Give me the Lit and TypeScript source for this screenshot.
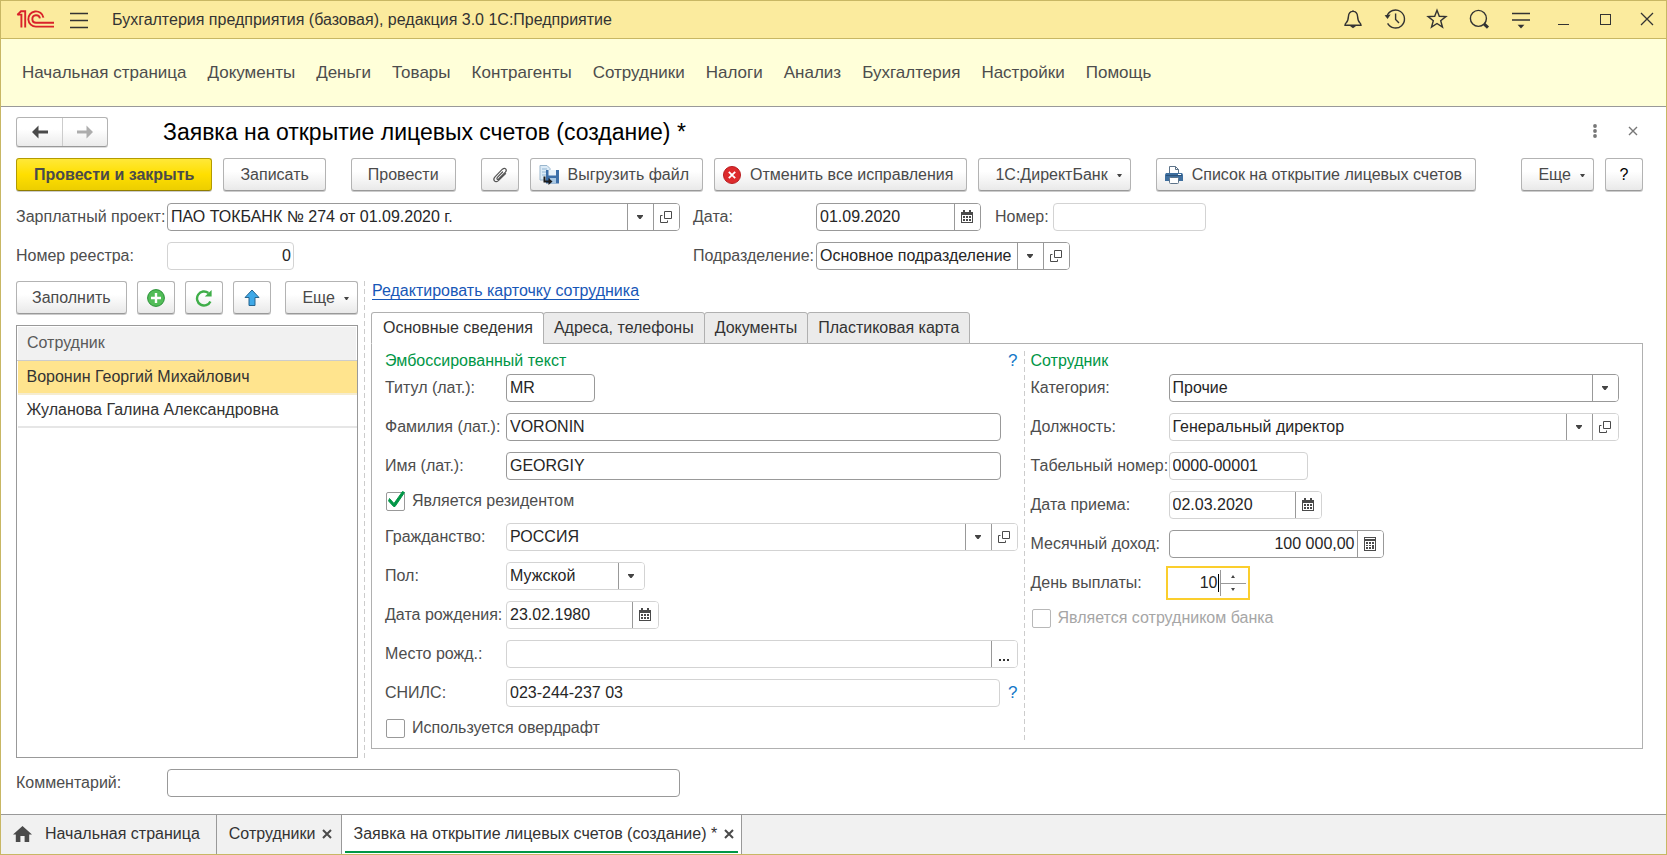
import { LitElement, html, css, svg, nothing } from "lit";
import { customElement, property, state } from "lit/decorators.js";
import { classMap } from "lit/directives/class-map.js";

const logo = svg`<svg width="38" height="19" viewBox="0 0 38 19" fill="none" stroke="#d9222a" stroke-width="1.9">
  <path d="M1.4 4.6H5.4V17.6"/><path d="M1.4 4.9L5 1.3H9.2V17.6"/>
  <path d="M27.4 7.6A7.6 7.6 0 1 0 20 16.6H38"/>
  <path d="M23.9 8.4A3.8 3.8 0 1 0 20 12.8H38"/>
</svg>`;

const stroked = (body: unknown, size = 24, width = 1.4) => svg`<svg width=${size} height=${size} viewBox="0 0 24 24" fill="none" stroke="currentColor" stroke-width=${width}>${body}</svg>`;

const icons: Record<string, unknown> = {
  burger: stroked(svg`<path d="M3 5.5H21M3 12.5H21M3 19.5H21"/>`),
  bell: stroked(svg`<path d="M12 3.2V4.5M12 4.4C8.8 4.4 7.6 7 7.4 9.6 7.2 12.6 6.8 14.4 5.2 15.8 4.2 16.7 4 17.2 4 18.3H20C20 17.2 19.8 16.7 18.8 15.8 17.2 14.4 16.8 12.6 16.6 9.6 16.4 7 15.2 4.4 12 4.4Z"/><path d="M9 19H15L12 21.2Z" fill="currentColor" stroke="none"/>`),
  history: stroked(svg`<path d="M4 9A9 9 0 1 1 4.6 16.4"/><path d="M1.6 8.2L7.6 7.4 4.6 12Z" fill="currentColor" stroke="none"/><path d="M12.6 6.5V12.5L16 16"/>`),
  star: stroked(svg`<path d="M12 3.2L14.3 9.3 20.9 9.6 15.7 13.7 17.5 20.2 12 16.5 6.5 20.2 8.3 13.7 3.1 9.6 9.7 9.3Z"/>`),
  search: stroked(svg`<circle cx="11.4" cy="11.4" r="8"/><path d="M17 16.8L21 20.6" stroke-width="3"/>`),
  service: stroked(svg`<path d="M3 6.5H21M3 13H21"/><path d="M8.6 17.8H15.4L12 21.4Z" fill="currentColor" stroke="none"/>`),
  minimize: svg`<svg width="24" height="24" viewBox="0 0 24 24" stroke="currentColor"><path d="M7 17.5H18"/></svg>`,
  maximize: svg`<svg width="24" height="24" viewBox="0 0 24 24" fill="none" stroke="currentColor"><rect x="7.5" y="7.5" width="10" height="10"/></svg>`,
  close: stroked(svg`<path d="M6 6L18 18M18 6L6 18"/>`, 24, 1.3),
  back: svg`<svg width="18" height="14" viewBox="0 0 18 14"><path d="M7.5 0.5L1 7 7.5 13.5V8.5H17V5.5H7.5Z" fill="#4a4a4a"/></svg>`,
  forward: svg`<svg width="18" height="14" viewBox="0 0 18 14"><path d="M10.5 0.5L17 7 10.5 13.5V8.5H1V5.5H10.5Z" fill="#adadad"/></svg>`,
  kebab: svg`<svg width="6" height="16" viewBox="0 0 6 16" fill="#777"><circle cx="3" cy="3" r="1.9"/><circle cx="3" cy="8" r="1.9"/><circle cx="3" cy="13" r="1.9"/></svg>`,
  cross: svg`<svg width="10" height="10" viewBox="0 0 10 10" stroke="#777" stroke-width="1.4"><path d="M1 1L9 9M9 1L1 9"/></svg>`,
  tabCross: svg`<svg width="10" height="10" viewBox="0 0 10 10" stroke="#4a4a4a" stroke-width="2"><path d="M1 1L9 9M9 1L1 9"/></svg>`,
  clip: svg`<svg width="20" height="20" viewBox="0 0 20 20" fill="none" stroke="#555" stroke-width="1.2" stroke-linecap="round"><path d="M12.6 7L7.4 12.4C6.2 13.8 7.4 15 8.6 14L15.4 7.2C17.6 4.6 15 2 12.4 4.2L5 11.8C2.2 15 5.2 18.2 8.4 15.6L15.6 8.6"/></svg>`,
  save: svg`<svg width="20" height="20" viewBox="0 0 20 20"><path d="M1 0.5H8L11 3.5V15H1Z" fill="#dcebf7" stroke="#9ab6cd"/><path d="M3 4H8M3 7H7M3 10H7" stroke="#8fb4d2"/><path d="M7 5H20V18.5H7Z" fill="#3c6ea8"/><path d="M9.5 5H17V10.5H9.5Z" fill="#e8f1f9"/><path d="M11 13H17V18.5H11Z" fill="#a9c8e4"/><path d="M5.5 11.5V16.5H11" fill="none" stroke="#1d1d1d" stroke-width="2"/><path d="M9.5 13L13.5 16.5 9.5 20Z" fill="#1d1d1d"/></svg>`,
  cancel: svg`<svg width="18" height="18" viewBox="0 0 18 18"><circle cx="9" cy="9" r="8.5" fill="#dd2a2c" stroke="#b81d20"/><path d="M5.8 5.8L12.2 12.2M12.2 5.8L5.8 12.2" stroke="#fff" stroke-width="1.8"/></svg>`,
  printer: svg`<svg width="18" height="18" viewBox="0 0 18 18"><path d="M4.5 8V0.5H10.5L13.5 3.5V8" fill="#fff" stroke="#5d7389"/><path d="M10.5 0.5V3.5H13.5" fill="none" stroke="#5d7389"/><path d="M1 7H17L18 8.5V15H0V8.5Z" fill="#3f6f9f"/><path d="M1 9.5H17" stroke="#2c527a"/><rect x="13" y="8" width="3" height="1" fill="#fff"/><rect x="4.5" y="11.5" width="9" height="6" rx="1" fill="#fff" stroke="#5d7389"/></svg>`,
  plus: svg`<svg width="18" height="18" viewBox="0 0 18 18"><circle cx="9" cy="9" r="8.4" fill="#52bd58" stroke="#2a9137"/><path d="M9 4V14M4 9H14" stroke="#fff" stroke-width="2.4"/></svg>`,
  refresh: svg`<svg width="18" height="18" viewBox="0 0 18 18"><path d="M15.4 12.4A7 7 0 1 1 13.4 4" fill="none" stroke="#3fae49" stroke-width="2.4"/><path d="M16.6 1V7.6H9.8Z" fill="#3fae49"/></svg>`,
  up: svg`<svg width="16" height="18" viewBox="0 0 16 18"><path d="M8 1L15 8.5H11V16.5H5V8.5H1Z" fill="#3fa9e8" stroke="#27658f"/></svg>`,
  caret: svg`<svg width="6" height="4" viewBox="0 0 6 4"><path d="M0 0H6V1L3.6 4H2.4L0 1Z" fill="#444"/></svg>`,
  smallCaret: svg`<svg width="5" height="4" viewBox="0 0 5 4"><path d="M0 1H5L3 4H2Z" fill="#444"/></svg>`,
  caretUp: svg`<svg width="4" height="3" viewBox="0 0 4 3"><path d="M0 3H4L2 0Z" fill="#444"/></svg>`,
  caretDown: svg`<svg width="4" height="3" viewBox="0 0 4 3"><path d="M0 0H4L2 3Z" fill="#444"/></svg>`,
  open: svg`<svg width="12" height="12" viewBox="0 0 12 12" fill="none" stroke="#4a4a4a"><path d="M4.5 0.5H11.5V7.5H4.5Z"/><path d="M2.5 4.5H0.5V11.5H7.5V9.5"/></svg>`,
  calendar: svg`<svg width="12" height="14" viewBox="0 0 12 14"><path d="M0 2H2V0H4V2H8V0H10V2H12V13H0Z" fill="#4a4a4a"/><path d="M1 5H11V12H1Z" fill="#fff"/><path d="M2 6H4V8H2ZM5 6H7V8H5ZM8 6H10V8H8ZM2 9H4V11H2ZM5 9H7V11H5ZM8 9H10V11H8Z" fill="#4a4a4a"/></svg>`,
  calc: svg`<svg width="12" height="14" viewBox="0 0 12 14"><path d="M0 0H12V14H0Z" fill="#4a4a4a"/><path d="M1 1H11V2H1ZM1 4H11V13H1Z" fill="#fff"/><path d="M2 5H4V7H2ZM5 5H7V7H5ZM8 5H10V7H8ZM2 8H4V9H2ZM5 8H7V9H5ZM8 8H10V12H8ZM2 10H4V12H2ZM5 10H7V12H5Z" fill="#4a4a4a"/></svg>`,
  dots: svg`<svg width="10" height="2" viewBox="0 0 10 2" fill="#333"><rect width="2" height="2"/><rect x="4" width="2" height="2"/><rect x="8" width="2" height="2"/></svg>`,
  home: svg`<svg width="19" height="16" viewBox="0 0 19 16"><path d="M9.5 0L19 8.5H16.2V16H11.6V10H7.4V16H2.8V8.5H0Z" fill="#4a4a4a"/></svg>`,
};

const base = css`
  * { box-sizing: border-box; }
  button, input, select { font: inherit; color: inherit; margin: 0; }
  button { cursor: pointer; }
  svg { display: block; flex: none; }
`;

@customElement("form-field")
export class FormField extends LitElement {
  @property() label = "";
  @property() value = "";
  @property() kind: "text" | "select" | "number" = "text";
  @property({ type: Array }) options: string[] = [];
  @property({ type: Array }) actions: string[] = [];
  @property({ type: Boolean }) muted = false;
  @property({ type: Boolean }) right = false;
  @property({ type: Boolean }) active = false;

  static styles = [base, css`
    :host { display: flex; align-items: center; min-width: 0; }
    label { flex: none; width: var(--label-width, 121px); line-height: 20px; color: #4d4d4d; white-space: nowrap; }
    .box { display: flex; flex: 1 1 auto; min-width: 0; width: var(--box-width, auto); max-width: var(--box-width, none); height: 28px; border: 1px solid #999; border-radius: 4px; background: #fff; overflow: hidden; }
    .muted { border-color: #d3d3d3; }
    .active { border-color: #fff; overflow: visible; border-radius: 0; outline: 2px solid #fbce2d; outline-offset: 1px; }
    .pick { display: grid; flex: 1; min-width: 0; }
    .pick > * { grid-area: 1 / 1; }
    input, select { flex: 1; width: 100%; min-width: 0; height: 26px; border: 0; outline: 0; padding: 0 3px; background: none; color: #262626; appearance: none; -moz-appearance: textfield; }
    .right { text-align: right; padding-right: 2px; }
    .active .right { padding-right: 0; }
    input::-webkit-inner-spin-button { appearance: none; margin: 0; }
    .cell { display: flex; align-items: center; justify-content: center; width: 26px; height: 26px; flex: none; padding: 0 1px 0 0; border: 0; border-left: 1px solid #999; background: #fff; }
    .arrow { justify-self: end; pointer-events: none; }
    .low { padding-top: 12px; }
    .cursor { width: 1px; height: 18px; margin: 4px 1px 0 0; background: #000; }
    .spin { display: flex; flex-direction: column; width: 26px; border-left: 1px solid #999; }
    .step { display: flex; flex: 1; align-items: center; justify-content: center; padding: 0; border: 0; background: none; }
    .step:first-child { border-bottom: 1px solid #999; }
  `];

  private names: Record<string, string> = { open: "Открыть", calendar: "Выбрать дату", calc: "Калькулятор", dots: "Выбрать" };

  render() {
    return html`
      <label for="control">${this.label}</label>
      <div class=${classMap({ box: true, muted: this.muted, active: this.active })}>
        ${this.kind === "select"
          ? html`<div class="pick">
              <select id="control">${[this.value, ...this.options].map((o) => html`<option>${o}</option>`)}</select>
              <span class="cell arrow">${icons.caret}</span>
            </div>`
          : html`<input id="control" type=${this.kind} class=${classMap({ right: this.right })} .value=${this.value}>`}
        ${this.active ? html`<span class="cursor"></span>` : nothing}
        ${this.kind === "number"
          ? html`<div class="spin">
              <button class="step" aria-label="Увеличить">${icons.caretUp}</button>
              <button class="step" aria-label="Уменьшить">${icons.caretDown}</button>
            </div>` : nothing}
        ${this.actions.map((a) => html`<button class=${classMap({ cell: true, low: a === "dots" })} aria-label=${this.names[a]}>${icons[a]}</button>`)}
      </div>
      <slot></slot>`;
  }
}

@customElement("check-field")
export class CheckField extends LitElement {
  @property() label = "";
  @property({ type: Boolean }) checked = false;
  @property({ type: Boolean }) disabled = false;

  static styles = [base, css`
    :host { display: flex; height: 21px; }
    label { display: flex; align-items: center; gap: 7px; height: 20px; line-height: 20px; color: #4d4d4d; }
    .disabled { color: #a6a6a6; }
    .tick { display: grid; width: 19px; height: 19px; margin-left: 1px; }
    .tick > * { grid-area: 1 / 1; }
    input { appearance: none; width: 19px; height: 19px; border: 1px solid #999; border-radius: 2px; background: #fff; }
    input:disabled { border-color: #b8b8b8; }
    .mark { pointer-events: none; visibility: hidden; }
    input:checked + .mark { visibility: visible; }
  `];

  render() {
    return html`<label class=${classMap({ disabled: this.disabled })}>
      <span class="tick">
        <input type="checkbox" .checked=${this.checked} ?disabled=${this.disabled}>
        <svg class="mark" width="19" height="19" viewBox="0 0 19 19" overflow="visible"><path d="M3.5 6.5L8 11.5 16.5 -0.5 18.5 0.5 9 14.5H7.6L2.6 9Z" fill="#009646" stroke="#009646"/></svg>
      </span>${this.label}</label>`;
  }
}

@customElement("app-root")
export class AppRoot extends LitElement {
  @state() private tab = 0;
  @state() private row = 0;

  static styles = [base, css`
    :host { display: flex; flex-direction: column; min-height: 100vh; box-sizing: border-box; border: 1px solid #c8b764; background: #fff; font: 16px/20px "Liberation Sans", Arial, sans-serif; color: #4d4d4d; }
    header { display: flex; align-items: center; height: 38px; padding: 0 7px 0 15px; border-bottom: 1px solid #c8b764; background: #fbeb9e; color: #333; }
    .menu { display: flex; padding: 0; margin: 0 21px 0 13px; border: 0; background: none; }
    .app { flex: 1; white-space: nowrap; }
    .tools { display: flex; gap: 18px; }
    .tool { padding: 0 0 1px; border: 0; background: none; }
    nav { display: flex; flex-wrap: wrap; align-items: center; gap: 0 21px; min-height: 68px; padding: 0 21px; border-bottom: 1px solid #999; background: #ffffd9; font-size: 17px; }
    nav a { color: #4d4d4d; text-decoration: none; white-space: nowrap; }
    main { display: flex; flex: 1; flex-direction: column; gap: 11px; padding: 10px 23px 17px 15px; }
    .head { display: flex; align-items: center; height: 30px; }
    .pair { display: flex; margin-right: 55px; border: 1px solid #b3b3b3; border-bottom-color: #999; border-radius: 3px; background: linear-gradient(#fff 40%, #ebebeb); box-shadow: 0 1px #ddd; }
    .pair button { display: flex; align-items: center; justify-content: center; width: 45px; height: 28px; padding: 0; border: 0; background: none; }
    .pair button + button { border-left: 1px solid #ccc; }
    h1 { flex: 1; margin: 0; font-size: 23px; line-height: 28px; font-weight: 400; color: #000; white-space: nowrap; }
    .plain { display: flex; padding: 0; border: 0; background: none; }
    .head .plain { margin: 0 5px 2px 25px; }
    .bar { display: flex; gap: 11px; padding-bottom: 1px; }
    .btn { display: flex; flex: none; align-items: center; justify-content: center; gap: 9px; height: 33px; padding: 1px 16px 0; border: 1px solid #b3b3b3; border-bottom-color: #999; border-radius: 3px; background: linear-gradient(#fff 40%, #e9e9e9); box-shadow: 0 1px #ccc; color: #4a4a4a; white-space: nowrap; }
    .square { width: 38px; padding: 1px 0 0; }
    .icon { padding-left: 8px; padding-right: 13px; }
    .drop { padding-right: 8px; }
    .main { padding: 1px 17px 0; border-color: #b39b00; border-bottom-color: #8f7c00; background: linear-gradient(#ffe838, #ffdf00 50%, #ecce00); font-weight: 700; }
    .fill { padding: 1px 15px 0; }
    .apart { margin-left: 14px; }
    .end { margin-left: auto; }
    .ask { color: #000; }
    .fields { display: grid; grid-template-columns: 664px 1fr; gap: 11px 13px; }
    .line { display: flex; gap: 14px; }
    .top { --label-width: 151px; }
    .side { --label-width: 123px; }
    .short { --label-width: 58px; }
    .work { display: flex; flex: 1; gap: 6px; }
    .left { display: flex; flex: none; flex-direction: column; gap: 10px; width: 342px; }
    .left .bar { gap: 10px; }
    .list { flex: 1; border: 1px solid #999; }
    table { width: 100%; border-collapse: collapse; color: #333; }
    th { height: 34px; padding: 0 9px 2px; border: 1px solid #fff; border-bottom: 1px solid #ccc; background: #f1f1f1; text-align: left; font-weight: 400; color: #5a5a5a; }
    td { height: 33px; padding: 0 9px; border-bottom: 2px solid #e6e6e6; cursor: default; }
    .chosen td { background: #ffe48e; border-bottom-color: #f5ecd0; }
    .rule { flex: none; width: 1px; background: repeating-linear-gradient(#ccc 0 5px, transparent 5px 8px); }
    .right { display: flex; flex: 1; flex-direction: column; min-width: 0; padding-bottom: 9px; }
    .link { align-self: flex-start; margin: 0 0 11px 1px; color: #1757b7; line-height: 20px; text-underline-offset: 3px; }
    .tabs { display: flex; z-index: 1; margin-bottom: -1px; }
    .tab { height: 32px; margin-right: -1px; padding: 0 10px; border: 1px solid #b0b0b0; border-radius: 3px 3px 0 0; background: #ebebeb; color: #333; white-space: nowrap; }
    .tab.on { border-bottom-color: #fff; background: #fff; padding: 0 10px 0 11px; }
    .panel { display: grid; flex: 1; grid-template-columns: 158fr 1px 147fr; gap: 6px; padding: 7px 23px 7px 13px; border: 1px solid #b0b0b0; }
    .col { display: flex; flex-direction: column; gap: 11px; min-width: 0; }
    .cat { --label-width: 138px; }
    h2 { display: flex; justify-content: space-between; margin: 0 0 -8px; font: inherit; line-height: 20px; color: #009646; }
    .hint { padding: 0; border: 0; background: none; color: #1478c8; font-size: 17px; line-height: 18px; }
    .wide { margin-right: 17px; }
    .snils { margin-left: 8px; }
    .w89 { --box-width: 89px; }
    .w127 { --box-width: 127px; }
    .w139 { --box-width: 139px; }
    .w153 { --box-width: 153px; }
    .w165 { --box-width: 165px; }
    .w215 { --box-width: 215px; }
    .w254 { --box-width: 254px; }
    .w513 { --box-width: 513px; }
    .w78 { --box-width: 78px; }
    footer { display: flex; height: 40px; border-top: 1px solid #999; background: #f1f1f1; color: #333; }
    .page { display: flex; align-items: center; gap: 7px; padding: 0 9px 1px 12px; border-right: 1px solid #999; }
    .home { gap: 13px; padding-right: 16px; }
    .current { display: grid; padding: 0 3px; background: #fff; border-right: 1px solid #999; }
    .current .page { border: 0; border-bottom: 2px solid #009646; margin-bottom: 1px; padding: 2px 4px 0 8px; }
  `];

  private menu = ["Начальная страница", "Документы", "Деньги", "Товары", "Контрагенты", "Сотрудники", "Налоги", "Анализ", "Бухгалтерия", "Настройки", "Помощь"];
  private tools: [string, string][] = [["bell", "Уведомления"], ["history", "История"], ["star", "Избранное"], ["search", "Поиск"], ["service", "Сервис"], ["minimize", "Свернуть"], ["maximize", "Развернуть"], ["close", "Закрыть"]];
  private tabNames = ["Основные сведения", "Адреса, телефоны", "Документы", "Пластиковая карта"];
  private people = ["Воронин Георгий Михайлович", "Жуланова Галина Александровна"];

  render() {
    return html`
      <header>
        ${logo}
        <button class="menu" aria-label="Меню">${icons.burger}</button>
        <span class="app">Бухгалтерия предприятия (базовая), редакция 3.0 1С:Предприятие</span>
        <div class="tools">${this.tools.map(([i, n]) => html`<button class="tool" aria-label=${n}>${icons[i]}</button>`)}</div>
      </header>
      <nav>${this.menu.map((m) => html`<a href="#">${m}</a>`)}</nav>
      <main>
        <div class="head">
          <div class="pair"><button aria-label="Назад">${icons.back}</button><button aria-label="Вперед">${icons.forward}</button></div>
          <h1>Заявка на открытие лицевых счетов (создание) *</h1>
          <button class="plain" aria-label="Еще">${icons.kebab}</button>
          <button class="plain" aria-label="Закрыть">${icons.cross}</button>
        </div>
        <div class="bar">
          <button class="btn main">Провести и закрыть</button>
          <button class="btn">Записать</button>
          <button class="btn apart">Провести</button>
          <button class="btn square apart" aria-label="Вложения">${icons.clip}</button>
          <button class="btn icon">${icons.save}Выгрузить файл</button>
          <button class="btn icon">${icons.cancel}Отменить все исправления</button>
          <button class="btn drop">1С:ДиректБанк${icons.smallCaret}</button>
          <button class="btn icon apart">${icons.printer}Список на открытие лицевых счетов</button>
          <button class="btn drop end">Еще${icons.smallCaret}</button>
          <button class="btn square ask">?</button>
        </div>
        <div class="fields">
          <form-field class="top w513" label="Зарплатный проект:" kind="select" value="ПАО ТОКБАНК № 274 от 01.09.2020 г." .actions=${["open"]}></form-field>
          <div class="line">
            <form-field class="side w165" label="Дата:" value="01.09.2020" .actions=${["calendar"]}></form-field>
            <form-field class="short w153" label="Номер:" muted></form-field>
          </div>
          <form-field class="top w127" label="Номер реестра:" value="0" muted right></form-field>
          <form-field class="side w254" label="Подразделение:" kind="select" value="Основное подразделение" .actions=${["open"]}></form-field>
        </div>
        <div class="work">
          <div class="left">
            <div class="bar">
              <button class="btn fill">Заполнить</button>
              <button class="btn square" aria-label="Добавить">${icons.plus}</button>
              <button class="btn square" aria-label="Обновить">${icons.refresh}</button>
              <button class="btn square" aria-label="Вверх">${icons.up}</button>
              <button class="btn drop end">Еще${icons.smallCaret}</button>
            </div>
            <div class="list">
              <table>
                <thead><tr><th scope="col">Сотрудник</th></tr></thead>
                <tbody>${this.people.map((p, i) => html`<tr class=${classMap({ chosen: i === this.row })} @click=${() => (this.row = i)}><td>${p}</td></tr>`)}</tbody>
              </table>
            </div>
          </div>
          <div class="rule"></div>
          <div class="right">
            <a class="link" href="#">Редактировать карточку сотрудника</a>
            <div class="tabs" role="tablist">
              ${this.tabNames.map((t, i) => html`<button role="tab" aria-selected=${i === this.tab} class=${classMap({ tab: true, on: i === this.tab })} @click=${() => (this.tab = i)}>${t}</button>`)}
            </div>
            <div class="panel">
              <div class="col">
                <h2>Эмбоссированный текст<button class="hint">?</button></h2>
                <form-field class="w89" label="Титул (лат.):" value="MR"></form-field>
                <form-field class="wide" label="Фамилия (лат.):" value="VORONIN"></form-field>
                <form-field class="wide" label="Имя (лат.):" value="GEORGIY"></form-field>
                <check-field label="Является резидентом" checked></check-field>
                <form-field label="Гражданство:" kind="select" value="РОССИЯ" muted .actions=${["open"]}></form-field>
                <form-field class="w139" label="Пол:" kind="select" value="Мужской" .options=${["Женский"]} muted></form-field>
                <form-field class="w153" label="Дата рождения:" value="23.02.1980" muted .actions=${["calendar"]}></form-field>
                <form-field label="Место рожд.:" muted .actions=${["dots"]}></form-field>
                <form-field label="СНИЛС:" value="023-244-237 03" muted><button class="hint snils">?</button></form-field>
                <check-field label="Используется овердрафт"></check-field>
              </div>
              <div class="rule"></div>
              <div class="col cat">
                <h2>Сотрудник</h2>
                <form-field label="Категория:" kind="select" value="Прочие"></form-field>
                <form-field label="Должность:" kind="select" value="Генеральный директор" muted .actions=${["open"]}></form-field>
                <form-field class="w139" label="Табельный номер:" value="0000-00001" muted></form-field>
                <form-field class="w153" label="Дата приема:" value="02.03.2020" muted .actions=${["calendar"]}></form-field>
                <form-field class="w215" label="Месячный доход:" value="100 000,00" right .actions=${["calc"]}></form-field>
                <form-field class="w78" label="День выплаты:" kind="number" value="10" right active></form-field>
                <check-field label="Является сотрудником банка" disabled></check-field>
              </div>
            </div>
          </div>
        </div>
        <form-field class="top w513" label="Комментарий:"></form-field>
      </main>
      <footer>
        <div class="page home">${icons.home}<span>Начальная страница</span></div>
        <div class="page"><span>Сотрудники</span><button class="plain" aria-label="Закрыть вкладку">${icons.tabCross}</button></div>
        <div class="current"><div class="page"><span>Заявка на открытие лицевых счетов (создание) *</span><button class="plain" aria-label="Закрыть вкладку">${icons.tabCross}</button></div></div>
      </footer>`;
  }
}
